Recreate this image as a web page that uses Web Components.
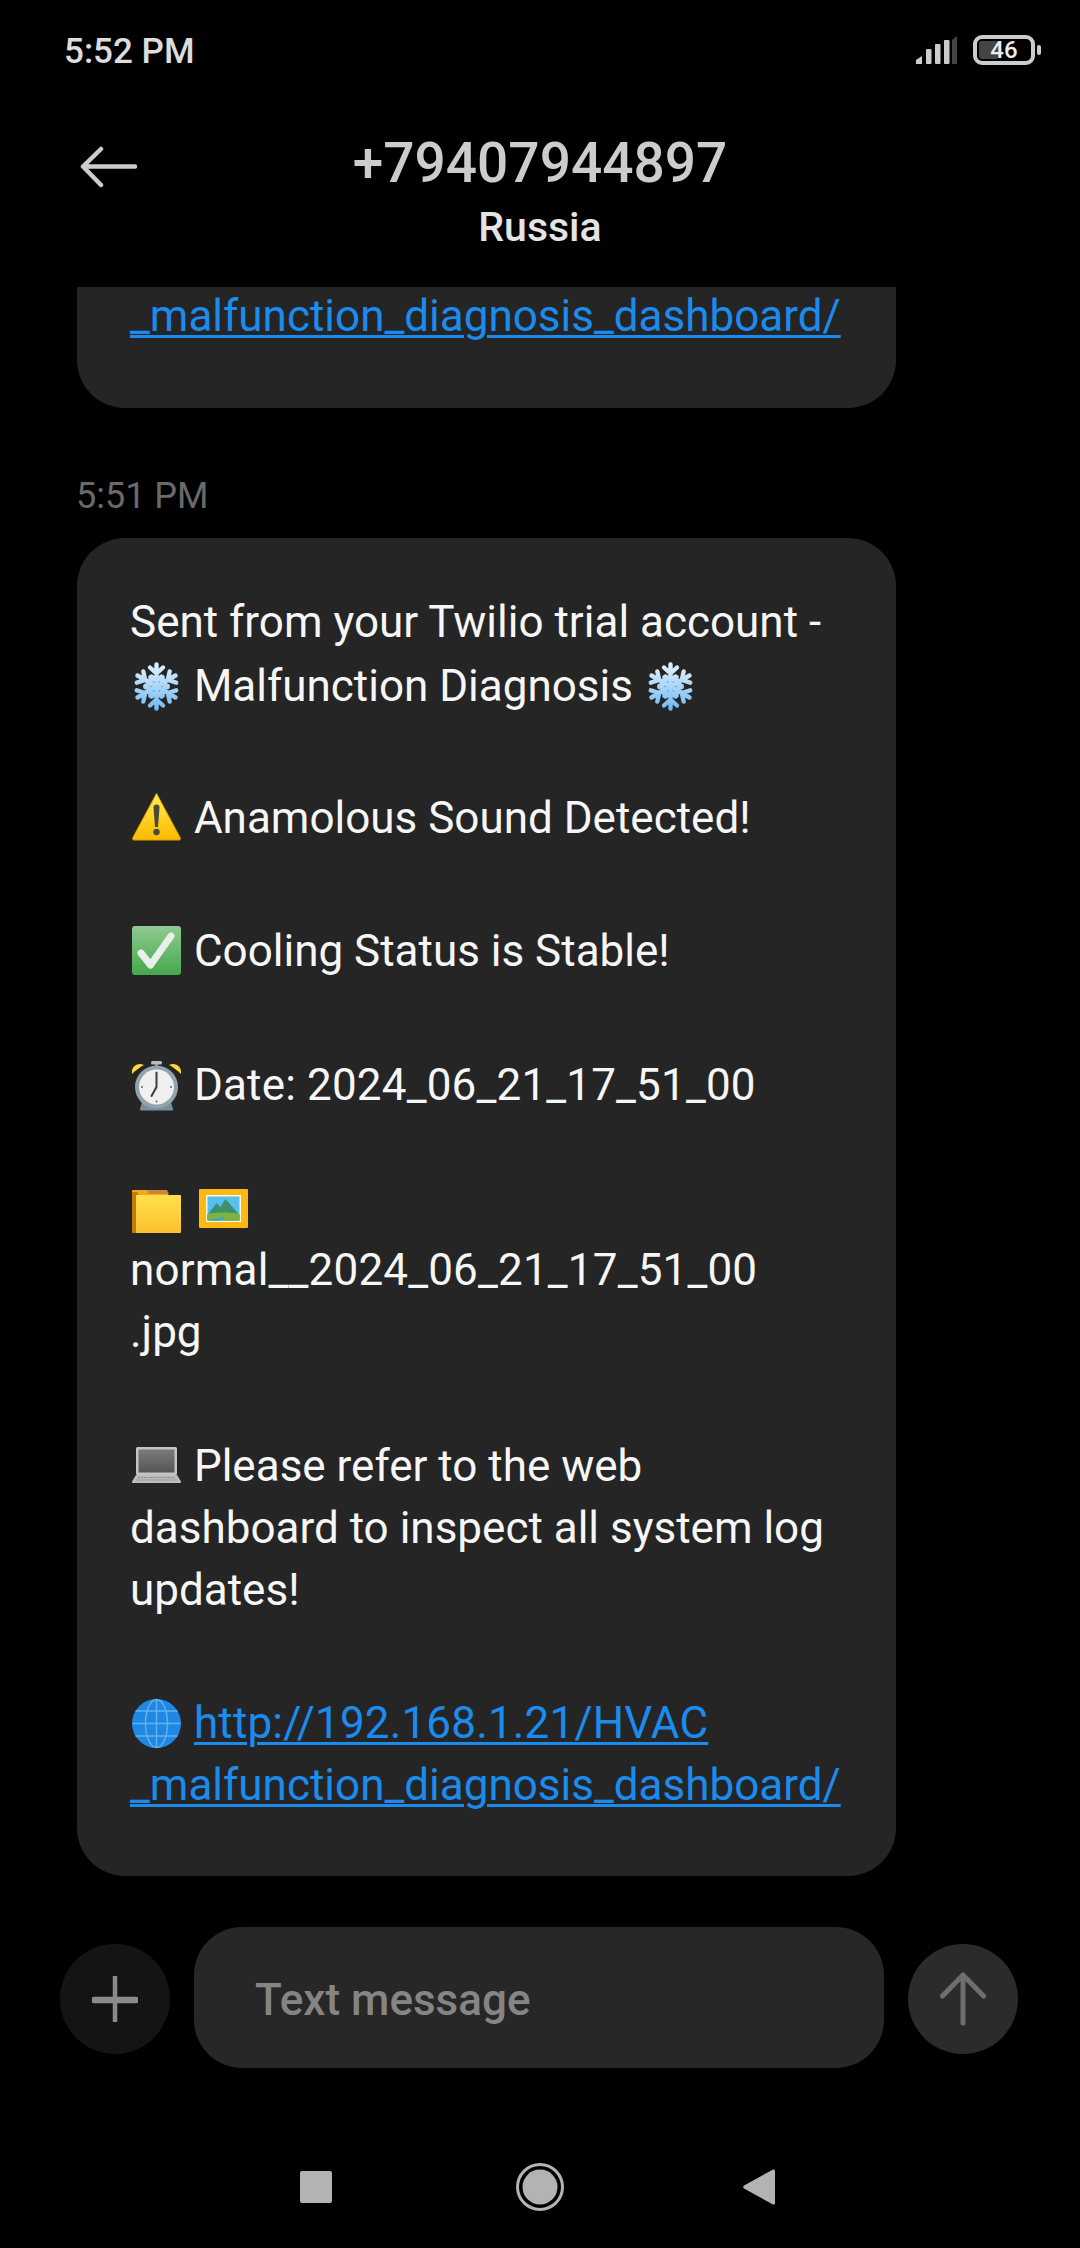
<!DOCTYPE html>
<html>
<head>
<meta charset="utf-8">
<style>
  html, body { margin: 0; padding: 0; background: #000; }
  body { width: 1080px; height: 2248px; overflow: hidden; font-family: Roboto, "Liberation Sans", sans-serif; }
</style>
</head>
<body>
<sms-app>
  <status-bar slot="status" time="5:52 PM" level="46"></status-bar>
  <chat-header slot="header" number="+79407944897" place="Russia"></chat-header>

  <chat-bubble slot="thread" class="cut">
    <sms-para><sms-link>_malfunction_diagnosis_dashboard/</sms-link></sms-para>
  </chat-bubble>
  <chat-time slot="thread">5:51 PM</chat-time>
  <chat-bubble slot="thread">
    <sms-para>Sent from your Twilio trial account -</sms-para>
    <sms-para gap="2"><sms-emoji name="snow"></sms-emoji> Malfunction Diagnosis <sms-emoji name="snow"></sms-emoji></sms-para>
    <sms-para gap="70"><sms-emoji name="warn"></sms-emoji> Anamolous Sound Detected!</sms-para>
    <sms-para gap="71"><sms-emoji name="check"></sms-emoji> Cooling Status is Stable!</sms-para>
    <sms-para gap="72"><sms-emoji name="clock"></sms-emoji> <sms-digits>Date: 2024_06_21_17_51_00</sms-digits></sms-para>
    <sms-para gap="61"><sms-emoji name="folder"></sms-emoji> <sms-emoji name="pic"></sms-emoji><br><sms-digits>normal__2024_06_21_17_51_00</sms-digits><br>.jpg</sms-para>
    <sms-para gap="72"><sms-emoji name="laptop"></sms-emoji> Please refer to the web<br>dashboard to inspect all system log<br>updates!</sms-para>
    <sms-para gap="71"><sms-emoji name="globe"></sms-emoji> <sms-link><sms-digits>http://192.168.1.21/HVAC</sms-digits></sms-link><br><sms-link>_malfunction_diagnosis_dashboard/</sms-link></sms-para>
  </chat-bubble>

  <chat-composer slot="composer" placeholder="Text message"></chat-composer>
  <nav-bar slot="nav"></nav-bar>
</sms-app>

<script>
const appTemplate = document.createElement('template');
appTemplate.innerHTML = `
  <style>
    :host { display: flex; flex-direction: column; width: 1080px; height: 2248px; background: #000; }
    .thread {
      height: 1640px;
      flex: none;
      overflow: hidden;
      display: flex;
      flex-direction: column;
      justify-content: flex-end;
      align-items: flex-start;
      padding: 0 0 51px 77px;
      box-sizing: border-box;
    }
  </style>
  <slot name="status"></slot>
  <slot name="header"></slot>
  <div class="thread"><slot name="thread"></slot></div>
  <slot name="composer"></slot>
  <slot name="nav"></slot>
`;
class SmsApp extends HTMLElement {
  constructor() {
    super();
    this.attachShadow({ mode: 'open' }).appendChild(appTemplate.content.cloneNode(true));
  }
}

class StatusBar extends HTMLElement {
  constructor() {
    super();
    this.attachShadow({ mode: 'open' }).innerHTML = `
      <style>
        :host {
          display: flex; align-items: flex-start; justify-content: space-between;
          height: 100px; box-sizing: border-box; padding: 32px 39px 0 64px; color: #ddd;
        }
        .time { font: 500 35px/40px Roboto, sans-serif; }
        .icons { display: flex; align-items: flex-start; padding-top: 3px; }
        .signal { display: block; margin-right: 16px; }
        .batt {
          position: relative; width: 62px; height: 30px; box-sizing: border-box;
          border: 4px solid #ccc; border-radius: 9px; overflow: hidden;
          display: flex; align-items: center; justify-content: center;
          font: 500 24px/22px Roboto, sans-serif; color: #eee;
        }
        .fill { position: absolute; left: 2px; top: 2px; bottom: 2px; width: 20px; background: #444; border-radius: 3px; }
        .batt span { position: relative; }
        .nub { width: 4px; height: 10px; background: #ccc; border-radius: 2px; margin: 10px 0 0 2px; }
      </style>
      <div class="time"></div>
      <div class="icons">
        <svg class="signal" width="41" height="30" viewBox="0 0 41 30">
          <path d="M0 29v-4l6-4v8z" fill="#ccc"/>
          <rect x="10" y="14" width="5.5" height="15" rx="1" fill="#ccc"/>
          <rect x="19" y="9" width="5.5" height="20" rx="1" fill="#ccc"/>
          <rect x="28" y="5" width="5.5" height="24" rx="1" fill="#ccc"/>
          <path d="M36 5l5-4v28h-5z" fill="#444"/>
        </svg>
        <div class="batt"><div class="fill"></div><span></span></div>
        <div class="nub"></div>
      </div>
    `;
    this.shadowRoot.querySelector('.time').textContent = this.getAttribute('time');
    this.shadowRoot.querySelector('.batt span').textContent = this.getAttribute('level');
  }
}

class ChatHeader extends HTMLElement {
  constructor() {
    super();
    this.attachShadow({ mode: 'open' }).innerHTML = `
      <style>
        :host {
          display: grid; grid-template-columns: 1fr auto 1fr; align-items: start;
          height: 187px; box-sizing: border-box; padding-top: 33px;
        }
        .back { display: block; margin: 13px 0 0 80px; }
        .who { text-align: center; }
        .num { font: 500 55px/60px Roboto, sans-serif; color: #ccc; }
        .place { font: 500 41px/46px Roboto, sans-serif; color: #e4e4e4; margin-top: 11px; }
      </style>
      <svg class="back" width="60" height="42" viewBox="0 0 60 42" fill="none" stroke="#ccc" stroke-width="4.5" stroke-linecap="round" stroke-linejoin="round">
        <path d="M55 20.5H4M21 3L3 20.5 21 39"/>
      </svg>
      <div class="who"><div class="num"></div><div class="place"></div></div>
      <div></div>
    `;
    this.shadowRoot.querySelector('.num').textContent = this.getAttribute('number');
    this.shadowRoot.querySelector('.place').textContent = this.getAttribute('place');
  }
}

class ChatBubble extends HTMLElement {
  constructor() {
    super();
    this.attachShadow({ mode: 'open' }).innerHTML = `
      <style>
        :host {
          display: block; flex: none; box-sizing: border-box; width: 819px;
          background: #252525; border-radius: 48px;
          padding: 53px 53px 60px 53px;
          color: #f6f6f6;
        }
        :host(.cut) { padding-bottom: 61px; }
      </style>
      <slot></slot>
    `;
  }
}

class SmsPara extends HTMLElement {
  constructor() {
    super();
    this.attachShadow({ mode: 'open' }).innerHTML = `
      <style>
        :host { display: block; font: 400 44px/62px Roboto, sans-serif; white-space: nowrap; }
      </style>
      <slot></slot>
    `;
    if (this.hasAttribute('gap')) this.style.marginTop = this.getAttribute('gap') + 'px';
  }
}

class SmsLink extends HTMLElement {
  constructor() {
    super();
    this.attachShadow({ mode: 'open' }).innerHTML = `
      <style>
        :host { display: inline; color: #1b8bee; text-decoration: underline; text-decoration-thickness: 3px; text-underline-offset: 4px; }
      </style>
      <slot></slot>
    `;
  }
}

// the digits on the phone run a little wider than the installed Roboto
class SmsDigits extends HTMLElement {
  constructor() {
    super();
    this.attachShadow({ mode: 'open' }).innerHTML = `
      <style>
        :host { display: inline; letter-spacing: 0.17px; }
      </style>
      <slot></slot>
    `;
  }
}

class ChatTime extends HTMLElement {
  constructor() {
    super();
    this.attachShadow({ mode: 'open' }).innerHTML = `
      <style>
        :host { display: block; flex: none; font: 400 36px/42px Roboto, sans-serif; color: #6a6a6a; margin: 67px 0 21px -1px; }
      </style>
      <slot></slot>
    `;
  }
}

// emoji are hand drawn, there is no colour emoji font here
const EMOJI = {
  snow: `
    <defs>
      <linearGradient id="g" x1="0" y1="0" x2="0" y2="1"><stop offset="0" stop-color="#e8f4fd"/><stop offset="1" stop-color="#6db8f2"/></linearGradient>
      <g id="arm" fill="none" stroke="#fff" stroke-width="4.4" stroke-linecap="round" stroke-linejoin="round">
        <path d="M24.5 24.5V2.5M18 5.5l6.500 6 6.500-6M19.500 14.500l5 4.500 5-4.500"/>
      </g>
      <mask id="m" maskUnits="userSpaceOnUse" x="0" y="0" width="49" height="49">
        <use href="#arm"/>
        <use href="#arm" transform="rotate(60 24.5 24.5)"/>
        <use href="#arm" transform="rotate(120 24.5 24.5)"/>
        <use href="#arm" transform="rotate(180 24.5 24.5)"/>
        <use href="#arm" transform="rotate(240 24.5 24.5)"/>
        <use href="#arm" transform="rotate(300 24.5 24.5)"/>
      </mask>
    </defs>
    <rect width="49" height="49" fill="url(#g)" mask="url(#m)"/>`,
  warn: `
    <defs><linearGradient id="g" x1="0" y1="0" x2="0" y2="1"><stop offset="0" stop-color="#fff04a"/><stop offset="1" stop-color="#fdb900"/></linearGradient></defs>
    <path d="M24.500 1.500L48 45.500a1.500 1.500 0 0 1-1.500 2.500h-44A1.500 1.500 0 0 1 1 45.500z" fill="url(#g)" stroke="#e0a800" stroke-width="1" stroke-linejoin="round"/>
    <path d="M21.500 15.500a3 3 0 0 1 6 0L26 35h-3z" fill="#4b4b3c"/>
    <circle cx="24.500" cy="40" r="3.200" fill="#4b4b3c"/>`,
  check: `
    <defs><linearGradient id="g" x1="0" y1="0" x2="0" y2="1"><stop offset="0" stop-color="#8fca92"/><stop offset="1" stop-color="#46a84c"/></linearGradient></defs>
    <rect width="49" height="49" rx="3" fill="url(#g)"/>
    <path d="M9 27l9.500 12L39 10" fill="none" stroke="#e9efe9" stroke-width="7" stroke-linecap="round" stroke-linejoin="round"/>`,
  clock: `
    <path d="M0 13C-1 5 6 1 12 4c-4 2-9 6-12 9zM49 13C50 5 43 1 37 4c4 2 9 6 12 9z" fill="#fdd835"/>
    <rect x="19" y="0" width="11" height="3.500" rx="1.500" fill="#bdbdbd"/>
    <rect x="23" y="3" width="3" height="4" fill="#9e9e9e"/>
    <path d="M11 38h27l3 10a1 1 0 0 1-1 1.500H9a1 1 0 0 1-1-1.500z" fill="#78909c"/>
    <circle cx="24.500" cy="26" r="21.500" fill="#90a4ae"/>
    <circle cx="24.500" cy="26" r="17.500" fill="#f0f0f0"/>
    <g fill="#666"><circle cx="24.500" cy="11.500" r="1"/><circle cx="24.500" cy="40.500" r="1"/><circle cx="10" cy="26" r="1"/><circle cx="39" cy="26" r="1"/></g>
    <path d="M24.500 12v14l-5 9" fill="none" stroke="#3c3c3c" stroke-width="2" stroke-linecap="round" stroke-linejoin="round"/>`,
  folder: `
    <defs><linearGradient id="g" x1="0" y1="0" x2="0" y2="1"><stop offset="0" stop-color="#ffe14d"/><stop offset="1" stop-color="#fcc02e"/></linearGradient></defs>
    <path d="M1 6h26l1.500 2H35l2 4h11a1 1 0 0 1 1 1v3H0V7a1 1 0 0 1 1-1z" fill="#f4a51c"/>
    <path d="M15 6h20l2 4H17z" fill="#c9873a"/>
    <rect y="8" width="6" height="41" rx="1" fill="#c27c0e"/>
    <path d="M4 11h44a1 1 0 0 1 1 1v36a1 1 0 0 1-1 1H4z" fill="url(#g)"/>`,
  pic: `
    <rect x="0" y="5" width="49" height="39" rx="1" fill="#fdb813"/>
    <rect x="7" y="11" width="35" height="27" fill="#fff8e1"/>
    <rect x="8.500" y="12.500" width="32" height="24" fill="#55c0ee"/>
    <path d="M8.500 31l9-12 4 4 5-8 14 16v5.500h-32z" fill="#3f8f6f"/>
    <path d="M8.500 30c8-2 22-2 32 0v6.500h-32z" fill="#7cb342"/>
    <path d="M11 36.500c3-3 13-1 12-4 4 1 2 3-4 4z" fill="#2f9fe8"/>`,
  laptop: `
    <defs><linearGradient id="g" x1="0" y1="0" x2="0" y2="1"><stop offset="0" stop-color="#7a7a7a"/><stop offset="1" stop-color="#565656"/></linearGradient></defs>
    <rect x="4" y="5" width="41" height="28" rx="1.500" fill="#c4c4c4"/>
    <rect x="6.500" y="7.500" width="36" height="23" fill="url(#g)"/>
    <path d="M4 33h41l4 6.500a1 1 0 0 1-1 1.500H1a1 1 0 0 1-1-1.500z" fill="#bdbdbd"/>
    <path d="M6 35.500h37M4.500 38h40" stroke="#8a8a8a" stroke-width="1.200" stroke-dasharray="2 1"/>`,
  globe: `
    <circle cx="24.500" cy="24.500" r="24.500" fill="#1e88e5"/>
    <g fill="none" stroke="#64b0ee" stroke-width="1.500">
      <ellipse cx="24.500" cy="24.500" rx="11" ry="24"/>
      <path d="M24.500 0v49M0.500 24.500h48M3.500 12h42M3.500 37h42"/>
    </g>`
};

class SmsEmoji extends HTMLElement {
  constructor() {
    super();
    const drop = { check: -9, warn: -8 }[this.getAttribute('name')] || -10;
    const shift = this.getAttribute('name') === 'pic' ? 3 : 0;
    this.attachShadow({ mode: 'open' }).innerHTML = `
      <style>
        :host { display: inline-block; width: 49px; height: 49px; margin: 0 2px 0 ${2 + shift}px; vertical-align: ${drop}px; line-height: 0; }
        svg { display: block; overflow: visible; }
      </style>
      <svg width="49" height="49" viewBox="0 0 49 49">${EMOJI[this.getAttribute('name')]}</svg>
    `;
  }
}

class ChatComposer extends HTMLElement {
  constructor() {
    super();
    this.attachShadow({ mode: 'open' }).innerHTML = `
      <style>
        :host {
          display: flex; align-items: center; height: 141px; flex: none;
          padding-left: 60px; box-sizing: border-box;
        }
        .round { width: 110px; height: 110px; border-radius: 50%; flex: none; display: flex; align-items: center; justify-content: center; margin-top: 3px; }
        .add { background: #141414; }
        .send { background: #2b2b2b; margin-left: 24px; }
        .input {
          width: 690px; height: 141px; margin-left: 24px; box-sizing: border-box;
          background: #272727; border-radius: 48px; padding: 5px 0 0 61px;
          display: flex; align-items: center;
          font: 500 44px/48px Roboto, sans-serif; color: #858585;
        }
        svg { display: block; }
      </style>
      <div class="round add">
        <svg width="46" height="46" viewBox="0 0 46 46" stroke="#8a8a8a" stroke-linecap="round" fill="none">
          <path d="M23 1v44" stroke-width="4.500"/><path d="M2 24h42" stroke-width="6.500"/>
        </svg>
      </div>
      <div class="input"></div>
      <div class="round send">
        <svg width="46" height="54" viewBox="0 0 46 54" fill="none" stroke="#6e6e6e" stroke-width="5" stroke-linecap="round" stroke-linejoin="round">
          <path d="M23 51V3M2.500 24L23 3l20.500 21"/>
        </svg>
      </div>
    `;
    this.shadowRoot.querySelector('.input').textContent = this.getAttribute('placeholder');
  }
}

class NavBar extends HTMLElement {
  constructor() {
    super();
    this.attachShadow({ mode: 'open' }).innerHTML = `
      <style>
        :host { display: flex; align-items: center; height: 180px; padding: 58px 0 0 300px; box-sizing: border-box; flex: none; }
        svg { display: block; flex: none; }
        .home { margin: 0 179px 0 184px; }
      </style>
      <svg width="32" height="32" viewBox="0 0 32 32"><rect width="32" height="32" rx="2" fill="#b3b3b3"/></svg>
      <svg class="home" width="48" height="48" viewBox="0 0 48 48">
        <circle cx="24" cy="24" r="22.500" fill="none" stroke="#b3b3b3" stroke-width="3"/>
        <circle cx="24" cy="24" r="17.500" fill="#b3b3b3"/>
      </svg>
      <svg width="32" height="38" viewBox="0 0 32 38"><path d="M30 1.500a1.500 1.500 0 0 1 2 1.500v32a1.500 1.500 0 0 1-2 1.500L1 20.500a2 2 0 0 1 0-3z" fill="#b3b3b3"/></svg>
    `;
  }
}

customElements.define('sms-app', SmsApp);
customElements.define('status-bar', StatusBar);
customElements.define('chat-header', ChatHeader);
customElements.define('chat-bubble', ChatBubble);
customElements.define('sms-para', SmsPara);
customElements.define('sms-link', SmsLink);
customElements.define('sms-digits', SmsDigits);
customElements.define('chat-time', ChatTime);
customElements.define('sms-emoji', SmsEmoji);
customElements.define('chat-composer', ChatComposer);
customElements.define('nav-bar', NavBar);
</script>
</body>
</html>
